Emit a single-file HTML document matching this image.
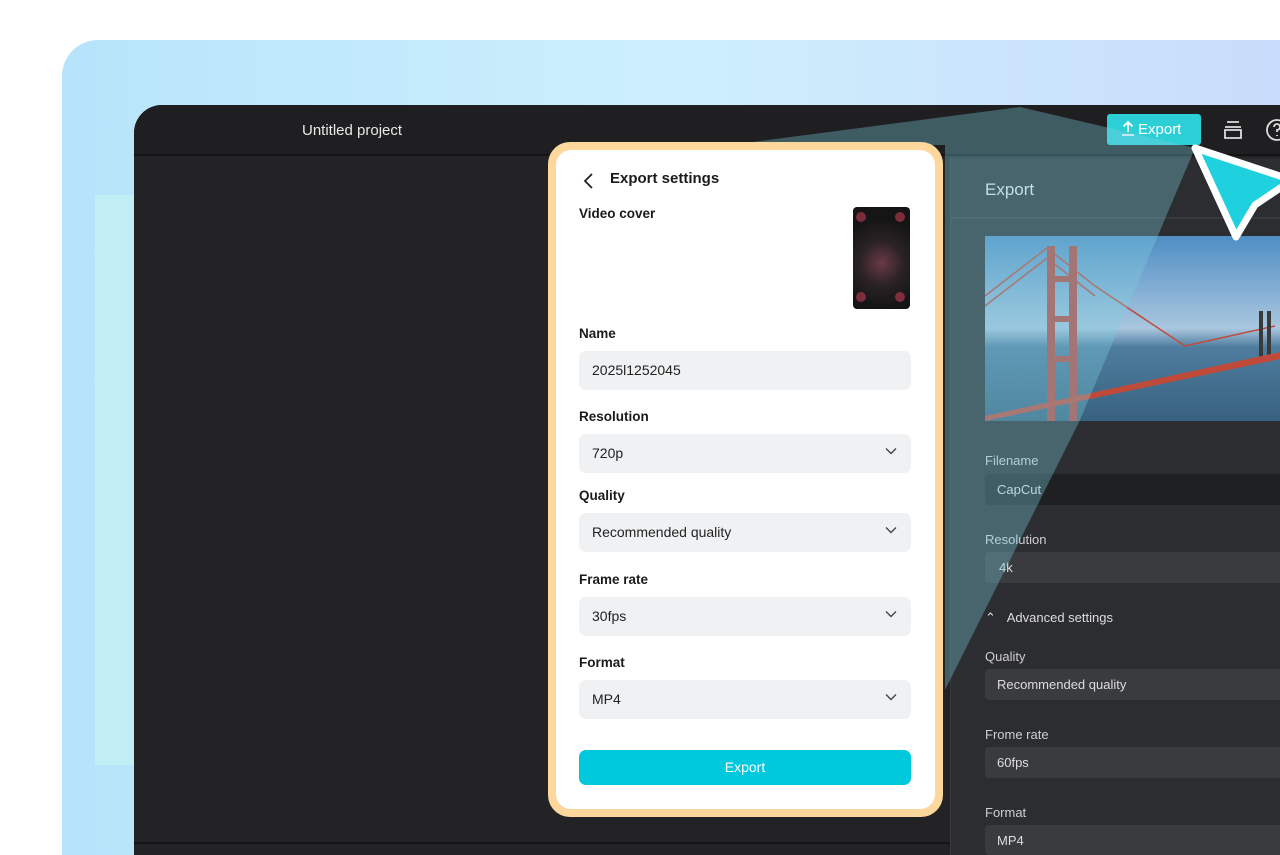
<!DOCTYPE html>
<html><head><meta charset="utf-8"><style>
*{margin:0;padding:0;box-sizing:border-box}
html,body{width:1280px;height:855px;overflow:hidden}
body{background:#fff;font-family:"Liberation Sans",sans-serif;position:relative}
.abs{position:absolute}
.bg{left:62px;top:40px;width:1218px;height:815px;border-radius:36px 0 0 0;background:linear-gradient(90deg,#b7e4fb 0%,#cdeffd 50%,#c9dcfb 100%)}
.strip{left:95px;top:195px;width:40px;height:570px;background:#c2eff6}
.win{left:134px;top:105px;width:1146px;height:750px;border-radius:28px 0 0 0;background:#232325;overflow:hidden}
.topbar{left:0;top:0;width:100%;height:51px;background:#1f1f21;border-bottom:2px solid #131314}
.title{left:168px;top:17px;color:#e8e8e8;font-size:15px}
.rp{left:816px;top:53px;width:330px;height:697px;background:#2c2d30;border-left:1px solid #3a3a3d;overflow:hidden}
.lbl{color:#cfcfd1;font-size:13px}
.dfield{height:31px;border-radius:4px;background:#3a3b3e;color:#ddd;font-size:13px;padding:8px 12px;width:300px}
.card{left:548px;top:142px;width:395px;height:675px;border-radius:22px;background:#fdd79b;padding:8px}
.inner{width:100%;height:100%;background:#fff;border-radius:15px;position:relative}
.h{font-weight:bold;font-size:13.5px;color:#1b1b1b}
.fld{left:23px;width:332px;height:39px;border-radius:7px;background:#eff1f3;font-size:14px;color:#222;padding:11px 13px}
.chev{position:absolute;right:14px;top:13px}
.btn{left:23px;top:600px;width:332px;height:35px;border-radius:7px;background:#00c8dd;color:#fff;font-size:14px;text-align:center;line-height:35px}
</style></head><body>
<div class="abs bg"></div>
<div class="abs strip"></div>
<div class="abs win">
  <div class="abs topbar"></div>
  <div class="abs title">Untitled project</div>
  <div class="abs" style="left:973px;top:9px;width:94px;height:31px;background:#2ccfd6;border-radius:3px;color:#fff;font-size:15px;line-height:31px;padding-left:14px">
    <svg width="14" height="16" viewBox="0 0 14 16" style="vertical-align:-2px;margin-right:3px"><path d="M7 12V2M2.5 6.5L7 2l4.5 4.5M1 15h12" stroke="#fff" stroke-width="1.8" fill="none"/></svg>Export</div>
  <svg class="abs" style="left:1088px;top:14px" width="22" height="22" viewBox="0 0 22 22"><path d="M5 3h12M3 8h16M3 11h16v8H3z" stroke="#ddd" stroke-width="1.8" fill="none"/></svg>
  <svg class="abs" style="left:1130px;top:12px" width="26" height="26" viewBox="0 0 26 26"><circle cx="13" cy="13" r="10" stroke="#ddd" stroke-width="1.8" fill="none"/><path d="M10 10a3 3 0 1 1 3 3v2M13 18v1" stroke="#ddd" stroke-width="1.8" fill="none"/></svg>
  <div class="abs" style="left:0;top:737px;width:816px;height:2px;background:#151516"></div>
  <div class="abs rp">
    <div class="abs" style="left:34px;top:22px;color:#e6e6e6;font-size:17px">Export</div>
    <div class="abs" style="left:0;top:59px;width:400px;height:2px;background:#38393c"></div>
    <div class="abs" style="left:34px;top:78px;width:300px;height:185px;background:linear-gradient(180deg,#4f8ec4 0%,#a9c6de 50%,#4f7d9f 60%,#38617f 100%);overflow:hidden">
      <svg width="300" height="185" viewBox="0 0 300 185">
        <path d="M0 60 L62 12 L110 50 L200 110 L290 90 M0 70 L62 22 L110 60" stroke="#c04a3a" stroke-width="1.5" fill="none"/>
        <rect x="62" y="10" width="8" height="175" fill="#b7473c"/><rect x="84" y="10" width="8" height="175" fill="#b7473c"/>
        <rect x="62" y="40" width="30" height="6" fill="#b7473c"/><rect x="62" y="80" width="30" height="6" fill="#b7473c"/><rect x="62" y="120" width="30" height="6" fill="#b7473c"/>
        <rect x="274" y="75" width="4" height="50" fill="#3a3a3a"/><rect x="282" y="75" width="4" height="50" fill="#3a3a3a"/>
        <path d="M0 180 L300 115 L300 122 L0 185Z" fill="#c04a3a"/>
      </svg>
    </div>
    <div class="abs lbl" style="left:34px;top:295px">Filename</div>
    <div class="abs dfield" style="left:34px;top:316px;background:#1f2022">CapCut</div>
    <div class="abs lbl" style="left:34px;top:374px">Resolution</div>
    <div class="abs dfield" style="left:34px;top:394px;padding-left:14px">4k</div>
    <div class="abs lbl" style="left:34px;top:452px;color:#ddd">⌃&nbsp;&nbsp;&nbsp;Advanced settings</div>
    <div class="abs lbl" style="left:34px;top:491px">Quality</div>
    <div class="abs dfield" style="left:34px;top:511px">Recommended quality</div>
    <div class="abs lbl" style="left:34px;top:569px">Frome rate</div>
    <div class="abs dfield" style="left:34px;top:589px">60fps</div>
    <div class="abs lbl" style="left:34px;top:647px">Format</div>
    <div class="abs dfield" style="left:34px;top:667px;height:30px">MP4</div>
  </div>
</div>
<svg class="abs" style="left:0;top:0" width="1280" height="855"><polygon points="730,145 1020,107 1195,148 1080,420 945,690 945,145" fill="#7fcfe0" opacity="0.35"/></svg>
<div class="abs card"><div class="inner">
  <svg class="abs" style="left:26px;top:22px" width="14" height="18" viewBox="0 0 14 18"><path d="M10 2L3 9l7 7" stroke="#222" stroke-width="1.8" fill="none"/></svg>
  <div class="abs h" style="left:54px;top:20px;font-size:15px">Export settings</div>
  <div class="abs h" style="left:23px;top:56px">Video cover</div>
  <div class="abs" style="left:297px;top:57px;width:57px;height:102px;border-radius:4px;background:radial-gradient(circle at 50% 55%,#6a3a45 0%,#2a2226 35%,#151515 70%);overflow:hidden">
    <div class="abs" style="left:3px;top:5px;width:10px;height:10px;background:#c23c55;opacity:.6;border-radius:50%"></div>
    <div class="abs" style="left:42px;top:5px;width:10px;height:10px;background:#c23c55;opacity:.6;border-radius:50%"></div>
    <div class="abs" style="left:3px;top:85px;width:10px;height:10px;background:#c23c55;opacity:.6;border-radius:50%"></div>
    <div class="abs" style="left:42px;top:85px;width:10px;height:10px;background:#c23c55;opacity:.6;border-radius:50%"></div>
  </div>
  <div class="abs h" style="left:23px;top:176px">Name</div>
  <div class="abs fld" style="top:201px">2025l1252045</div>
  <div class="abs h" style="left:23px;top:259px">Resolution</div>
  <div class="abs fld" style="top:284px">720p<svg class="chev" width="12" height="8" viewBox="0 0 12 8"><path d="M1 1.5l5 5 5-5" stroke="#444" stroke-width="1.4" fill="none"/></svg></div>
  <div class="abs h" style="left:23px;top:338px">Quality</div>
  <div class="abs fld" style="top:363px">Recommended quality<svg class="chev" width="12" height="8" viewBox="0 0 12 8"><path d="M1 1.5l5 5 5-5" stroke="#444" stroke-width="1.4" fill="none"/></svg></div>
  <div class="abs h" style="left:23px;top:422px">Frame rate</div>
  <div class="abs fld" style="top:447px">30fps<svg class="chev" width="12" height="8" viewBox="0 0 12 8"><path d="M1 1.5l5 5 5-5" stroke="#444" stroke-width="1.4" fill="none"/></svg></div>
  <div class="abs h" style="left:23px;top:505px">Format</div>
  <div class="abs fld" style="top:530px">MP4<svg class="chev" width="12" height="8" viewBox="0 0 12 8"><path d="M1 1.5l5 5 5-5" stroke="#444" stroke-width="1.4" fill="none"/></svg></div>
  <div class="abs btn">Export</div>
</div></div>
<svg class="abs" style="left:0;top:0" width="1280" height="855"><polygon points="1195,148 1292,180 1255,205 1236,237" fill="#1fd0de" stroke="#fff" stroke-width="7" stroke-linejoin="round"/></svg>
</body></html>
